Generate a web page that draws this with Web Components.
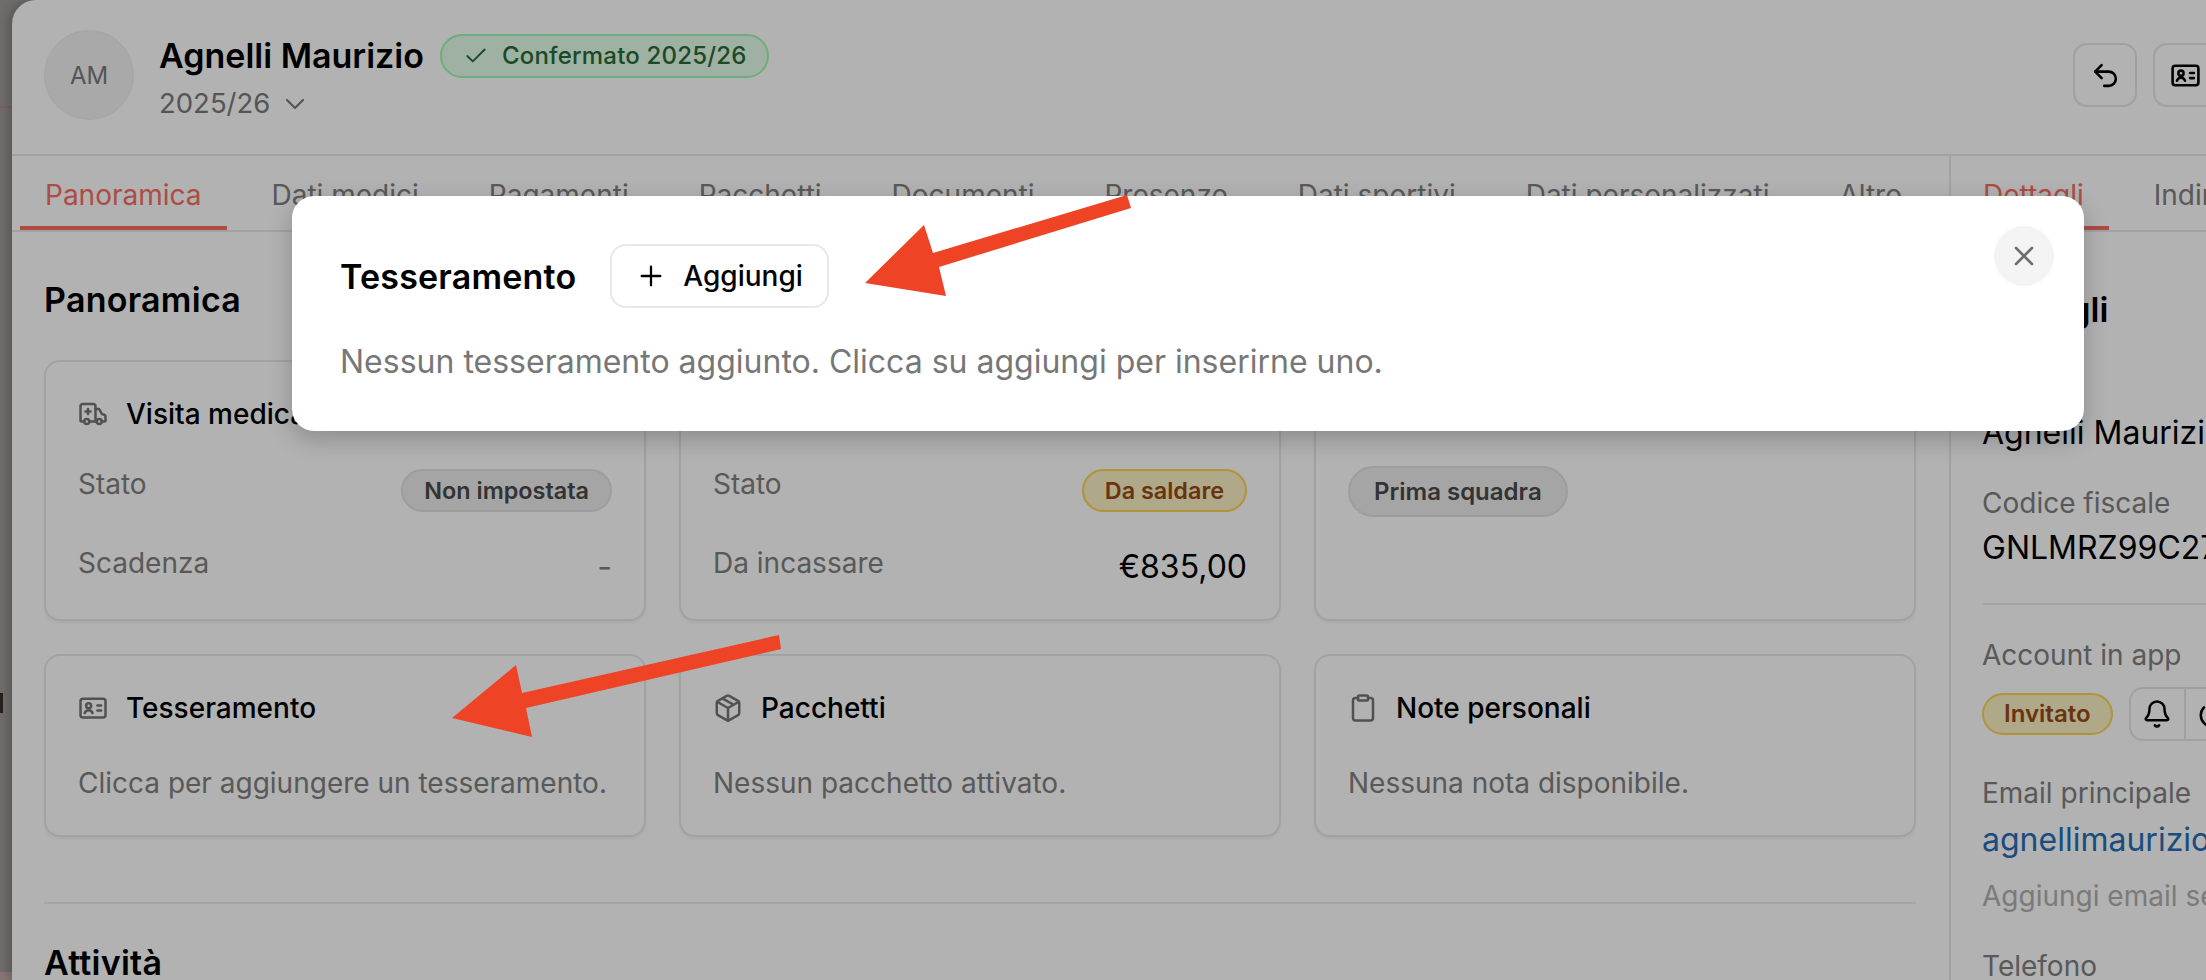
<!DOCTYPE html>
<html lang="it">
<head>
<meta charset="utf-8">
<title>Tesseramento</title>
<style>
  html, body { margin: 0; height: 100%; overflow: hidden; background: #9f9b9b; }
  body { font-family: Inter, "Liberation Sans", sans-serif; color: #000; }
</style>
</head>
<body>
<app-stage>
  <player-drawer slot="drawer">
    <drawer-header slot="header" name="Agnelli Maurizio" season="2025/26" initials="AM">
      <status-pill slot="status" tone="green" size="status"><ui-icon name="check" size="26" stroke="1.7"></ui-icon>Confermato 2025/26</status-pill>
      <icon-button slot="actions"><ui-icon name="undo" size="31"></ui-icon></icon-button>
      <icon-button slot="actions"><ui-icon name="idcard" size="31"></ui-icon></icon-button>
    </drawer-header>

    <tab-strip slot="main-tabs" inset="8">
      <tab-item active>Panoramica</tab-item>
      <tab-item>Dati medici</tab-item>
      <tab-item>Pagamenti</tab-item>
      <tab-item>Pacchetti</tab-item>
      <tab-item>Documenti</tab-item>
      <tab-item>Presenze</tab-item>
      <tab-item>Dati sportivi</tab-item>
      <tab-item>Dati personalizzati</tab-item>
      <tab-item>Altro</tab-item>
    </tab-strip>

    <overview-panel slot="main">
      <info-card slot="top" icon="ambulance" title="Visita medica">
        <card-row label="Stato"><status-pill tone="grey">Non impostata</status-pill></card-row>
        <card-row label="Scadenza"><span style="font-size:32px;line-height:38px;color:#808080">-</span></card-row>
      </info-card>
      <info-card slot="top" icon="wallet" title="Pagamenti">
        <card-row label="Stato"><status-pill tone="yellow">Da saldare</status-pill></card-row>
        <card-row label="Da incassare"><span style="font-size:32px;line-height:38px">€835,00</span></card-row>
      </info-card>
      <info-card slot="top" icon="users" title="Squadre">
        <status-pill tone="grey" size="tall">Prima squadra</status-pill>
      </info-card>
      <info-card slot="bottom" icon="idcard" title="Tesseramento" note="Clicca per aggiungere un tesseramento."></info-card>
      <info-card slot="bottom" icon="package" title="Pacchetti" note="Nessun pacchetto attivato."></info-card>
      <info-card slot="bottom" icon="clipboard" title="Note personali" note="Nessuna nota disponibile."></info-card>
    </overview-panel>

    <tab-strip slot="side-tabs" inset="7">
      <tab-item active>Dettagli</tab-item>
      <tab-item>Indirizzo</tab-item>
    </tab-strip>

    <details-panel slot="side">
      <side-field label="Nome" style="--top:40px">Agnelli Maurizio</side-field>
      <side-field label="Codice fiscale" style="--top:30px">GNLMRZ99C27A794X</side-field>
      <hr-line></hr-line>
      <side-field label="Account in app">
        <account-row>
          <status-pill tone="yellow" size="small">Invitato</status-pill>
          <ui-icon slot="first" name="bell" size="30"></ui-icon>
          <ui-icon slot="second" name="power" size="30"></ui-icon>
        </account-row>
      </side-field>
      <side-field label="Email principale" style="--top:34px;--under:7px" tone="link">agnellimaurizio@gmail.com</side-field>
      <side-field style="--top:16px" tone="muted">Aggiungi email secondaria</side-field>
      <side-field label="Telefono" style="--top:34px">-</side-field>
    </details-panel>
  </player-drawer>

  <page-scrim></page-scrim>

  <tessera-modal title="Tesseramento">
    <add-button slot="action">Aggiungi</add-button>
    Nessun tesseramento aggiunto. Clicca su aggiungi per inserirne uno.
  </tessera-modal>

  <note-arrows></note-arrows>
</app-stage>

<script>
const ICONS = {
  check: '<path d="M20 6 9 17l-5-5"/>',
  chevron: '<path d="m6 9 6 6 6-6"/>',
  plus: '<path d="M5 12h14M12 5v14"/>',
  x: '<path d="M18 6 6 18M6 6l12 12"/>',
  undo: '<path d="M9 14 4 9l5-5"/><path d="M4 9h10.5a5.5 5.5 0 0 1 0 11H11"/>',
  idcard: '<rect x="2" y="4.5" width="20" height="15" rx="2"/><circle cx="8.5" cy="10.2" r="2"/><path d="M5.4 16c.5-1.5 1.7-2.3 3.1-2.3s2.6.8 3.1 2.3M15.5 10h3M15.5 14h3"/>',
  ambulance: '<path d="M10 10H6M8 8v4M9 18h6"/><path d="M14 18V6a2 2 0 0 0-2-2H4a2 2 0 0 0-2 2v11a1 1 0 0 0 1 1h2"/><path d="M19 18h2a1 1 0 0 0 1-1v-3.28a1 1 0 0 0-.684-.948l-1.923-.641a1 1 0 0 1-.578-.502l-1.539-3.076A1 1 0 0 0 16.382 8H14"/><circle cx="17" cy="18" r="2"/><circle cx="7" cy="18" r="2"/>',
  package: '<path d="M11 21.73a2 2 0 0 0 2 0l7-4A2 2 0 0 0 21 16V8a2 2 0 0 0-1-1.73l-7-4a2 2 0 0 0-2 0l-7 4A2 2 0 0 0 3 8v8a2 2 0 0 0 1 1.73z"/><path d="M12 22V12M3.29 7 12 12l8.71-5M7.5 4.27l9 5.15"/>',
  clipboard: '<rect x="8" y="2" width="8" height="4" rx="1"/><path d="M16 4h2a2 2 0 0 1 2 2v14a2 2 0 0 1-2 2H6a2 2 0 0 1-2-2V6a2 2 0 0 1 2-2h2"/>',
  wallet: '<rect x="2" y="6" width="20" height="14" rx="2"/><path d="M2 10h20"/>',
  users: '<circle cx="9" cy="8" r="4"/><path d="M2 21a7 7 0 0 1 14 0"/>',
  bell: '<path d="M10.268 21a2 2 0 0 0 3.464 0"/><path d="M3.262 15.326A1 1 0 0 0 4 17h16a1 1 0 0 0 .74-1.673C19.41 13.956 18 12.499 18 8A6 6 0 0 0 6 8c0 4.499-1.411 5.956-2.738 7.326"/>',
  power: '<path d="M12 2v10"/><path d="M18.4 6.6a9 9 0 1 1-12.77.04"/>'
};

// every element here is just a shadow root with fixed markup
function shadow(el, html) {
  el.attachShadow({ mode: 'open' }).innerHTML = html;
}

class UiIcon extends HTMLElement {
  connectedCallback() {
    const size = this.getAttribute('size') || 30;
    const stroke = this.getAttribute('stroke') || 2;
    shadow(this, `
      <style>:host { display: inline-flex; flex: none; } svg { display: block; }</style>
      <svg width="${size}" height="${size}" viewBox="0 0 24 24" fill="none" stroke="currentColor"
        stroke-width="${stroke}" stroke-linecap="round" stroke-linejoin="round">${ICONS[this.getAttribute('name')]}</svg>`);
  }
}

class AppStage extends HTMLElement {
  constructor() {
    super();
    shadow(this, `
      <style>
        :host { display: block; position: relative; width: 2206px; height: 980px; overflow: hidden; background: #9f9b9b; }
        .line { position: absolute; left: 0; top: 106px; height: 2px; width: 12px; background: #b08a8a; }
        .tick { position: absolute; left: 0; top: 693px; width: 3px; height: 20px; background: #3a2c2c; }
        .foot { position: absolute; left: 0; bottom: 0; width: 12px; height: 8px; background: #c2a8a8; }
        .sheet { position: relative; margin-left: 12px; }
      </style>
      <div class="line"></div><div class="tick"></div><div class="foot"></div>
      <div class="sheet"><slot name="drawer"></slot></div>
      <slot></slot>`);
  }
}

class PlayerDrawer extends HTMLElement {
  constructor() {
    super();
    shadow(this, `
      <style>
        :host { display: block; width: 2237px; height: 980px; background: #fff; border-top-left-radius: 24px; overflow: hidden; box-shadow: -4px 0 10px rgba(0,0,0,.2); }
        .body { display: grid; grid-template-columns: 1937px 1fr; height: 824px; }
        .col { min-width: 0; overflow: hidden; }
        .side { border-left: 2px solid #e9e9e9; }
      </style>
      <slot name="header"></slot>
      <div class="body">
        <div class="col"><slot name="main-tabs"></slot><slot name="main"></slot></div>
        <div class="col side"><slot name="side-tabs"></slot><slot name="side"></slot></div>
      </div>`);
  }
}

class DrawerHeader extends HTMLElement {
  connectedCallback() {
    shadow(this, `
      <style>
        :host { display: flex; align-items: flex-start; box-sizing: border-box; height: 156px; padding: 30px 32px 0; border-bottom: 2px solid #e9e9e9; }
        .avatar { width: 90px; height: 90px; box-sizing: border-box; border: 2px solid #f0f0f0; border-radius: 50%; background: #f3f3f3; color: #7a7a7a;
          display: flex; align-items: center; justify-content: center; font-size: 24px; margin-right: 25px; }
        .top { display: flex; align-items: center; gap: 16px; height: 47px; margin-top: 2px; }
        .name { font-size: 34px; font-weight: 600; white-space: nowrap; }
        .season { display: flex; align-items: center; gap: 9px; color: #7a7a7a; font-size: 27.5px; line-height: 36px; margin-top: 6px; }
        .season ui-icon { margin-top: 2px; }
        .actions { display: flex; gap: 16px; margin-left: auto; margin-top: 13px; }
      </style>
      <div class="avatar">${this.getAttribute('initials')}</div>
      <div>
        <div class="top"><span class="name">${this.getAttribute('name')}</span><slot name="status"></slot></div>
        <div class="season">${this.getAttribute('season')}<ui-icon name="chevron" size="32" stroke="1.6"></ui-icon></div>
      </div>
      <div class="actions"><slot name="actions"></slot></div>`);
  }
}

class IconButton extends HTMLElement {
  constructor() {
    super();
    shadow(this, `
      <style>
        :host { display: flex; align-items: center; justify-content: center; box-sizing: border-box; width: 64px; height: 64px;
          border: 2px solid #e6e6e6; border-radius: 14px; background: #fff; }
      </style><slot></slot>`);
  }
}

class StatusPill extends HTMLElement {
  connectedCallback() {
    const tones = {
      green: ['#e3fee9', '#9ff5b1', '#286a36'],
      grey: ['#ededed', '#e1e1e1', '#4a4a4a'],
      yellow: ['#fbf1c5', '#fed354', '#974a17']
    };
    const sizes = {
      status: 'height:44px;padding:0 20px 0 21px;gap:13px;font-size:24px;font-weight:500;letter-spacing:.2px',
      tall: 'height:51px;padding:0 24px;font-size:24px',
      small: 'height:42px;padding:0 20px;font-size:24px',
      normal: 'height:43px;padding:0 21px;font-size:23.4px'
    };
    const [bg, line, ink] = tones[this.getAttribute('tone')];
    const size = sizes[this.getAttribute('size') || 'normal'];
    shadow(this, `
      <style>
        :host { display: inline-flex; align-items: center; box-sizing: border-box; white-space: nowrap; font-weight: 600;
          border-radius: 999px; background: ${bg}; border: 2px solid ${line}; color: ${ink}; ${size}; }
      </style><slot></slot>`);
  }
}

class TabStrip extends HTMLElement {
  connectedCallback() {
    shadow(this, `
      <style>
        :host { display: flex; gap: 20px; height: 76px; box-sizing: border-box; padding-left: ${this.getAttribute('inset')}px; border-bottom: 2px solid #e9e9e9; white-space: nowrap; }
      </style><slot></slot>`);
  }
}

class TabItem extends HTMLElement {
  constructor() {
    super();
    shadow(this, `
      <style>
        :host { display: block; flex: none; box-sizing: border-box; height: 74px; padding: 20px 25px 12px; font-size: 28px; line-height: 38px; color: #808080; border-bottom: 4px solid transparent; }
        :host([active]) { color: #f76e63; border-bottom-color: #f76e63; }
      </style><slot></slot>`);
  }
}

class OverviewPanel extends HTMLElement {
  constructor() {
    super();
    shadow(this, `
      <style>
        :host { display: block; padding: 48px 33px 0 32px; }
        h2 { margin: 0; font-size: 34px; line-height: 40px; font-weight: 600; letter-spacing: .25px; }
        .grid { display: grid; grid-template-columns: repeat(3, 1fr); grid-template-rows: 261px 183px; gap: 33px; margin-top: 40px; }
        hr { border: 0; height: 2px; background: #ededed; margin: 65px 0 39px; }
      </style>
      <h2>Panoramica</h2>
      <div class="grid"><slot name="top"></slot><slot name="bottom"></slot></div>
      <hr>
      <h2>Attività</h2>`);
  }
}

class InfoCard extends HTMLElement {
  connectedCallback() {
    const note = this.getAttribute('note');
    shadow(this, `
      <style>
        :host { display: block; box-sizing: border-box; padding: 32px 32px 0 32px; border: 2px solid #e9e9e9; border-radius: 16px; background: #fff; box-shadow: 0 2px 3px rgba(0,0,0,.05); }
        .title { display: flex; align-items: center; gap: 18px; font-size: 28px; font-weight: 500; line-height: 40px; white-space: nowrap; }
        ui-icon { color: #757575; }
        .body { display: flex; flex-direction: column; align-items: flex-start; gap: 43px; margin-top: 32px; }
        .note { color: #808080; font-size: 28px; line-height: 36px; margin-top: 37px; white-space: nowrap; }
      </style>
      <div class="title"><ui-icon name="${this.getAttribute('icon')}" size="30"></ui-icon>${this.getAttribute('title')}</div>
      ${note ? `<div class="note">${note}</div>` : '<div class="body"><slot></slot></div>'}`);
  }
}

class CardRow extends HTMLElement {
  connectedCallback() {
    shadow(this, `
      <style>
        :host { display: flex; justify-content: space-between; align-items: flex-start; align-self: stretch; height: 36px; font-size: 28px; line-height: 36px; }
        .label { color: #808080; }
        .val { margin-top: 3px; }
      </style>
      <span class="label">${this.getAttribute('label')}</span><span class="val"><slot></slot></span>`);
  }
}

class DetailsPanel extends HTMLElement {
  constructor() {
    super();
    shadow(this, `
      <style>
        :host { display: block; padding: 58px 0 0 31px; white-space: nowrap; }
        h2 { margin: 0; font-size: 34px; line-height: 40px; font-weight: 600; }
      </style>
      <h2>Dettagli</h2><slot></slot>`);
  }
}

class SideField extends HTMLElement {
  connectedCallback() {
    const label = this.getAttribute('label');
    const tones = { link: '#266eb6', muted: '#b0b0b0' };
    const ink = tones[this.getAttribute('tone')] || '#000';
    shadow(this, `
      <style>
        :host { display: block; margin-top: var(--top, 0); }
        .label { color: #808080; font-size: 28px; line-height: 36px; margin-bottom: var(--under, 5px); }
        .value { color: ${ink}; font-size: 32px; line-height: 44px; }
        :host([tone="muted"]) .value { font-size: 28px; line-height: 36px; }
      </style>
      ${label ? `<div class="label">${label}</div>` : ''}
      <div class="value"><slot></slot></div>`);
  }
}

class HrLine extends HTMLElement {
  constructor() {
    super();
    shadow(this, `<style>:host { display: block; height: 2px; margin: 33px 0 32px; background: #ededed; }</style>`);
  }
}

class AccountRow extends HTMLElement {
  constructor() {
    super();
    shadow(this, `
      <style>
        :host { display: flex; align-items: center; gap: 16px; margin-top: 14px; height: 54px; }
        .group { display: flex; box-sizing: border-box; height: 54px; border: 2px solid #e6e6e6; border-radius: 14px; color: #000; }
        .cell { display: flex; align-items: center; justify-content: center; width: 53px; }
        .cell + .cell { border-left: 2px solid #e6e6e6; }
      </style>
      <slot></slot>
      <div class="group">
        <div class="cell"><slot name="first"></slot></div>
        <div class="cell"><slot name="second"></slot></div>
      </div>`);
  }
}

class PageScrim extends HTMLElement {
  constructor() {
    super();
    shadow(this, `<style>:host { display: block; position: absolute; inset: 0; background: rgba(0,0,0,.3); }</style>`);
  }
}

class AddButton extends HTMLElement {
  constructor() {
    super();
    shadow(this, `
      <style>
        :host { display: inline-flex; align-items: center; gap: 16px; box-sizing: border-box; height: 64px; padding: 0 24px 0 23px; border: 2px solid #e8e8e8; border-radius: 16px; background: #fff;
          color: #000; font-size: 28px; font-weight: 500; }
      </style>
      <ui-icon name="plus" size="32" stroke="1.7"></ui-icon><slot></slot>`);
  }
}

class TesseraModal extends HTMLElement {
  connectedCallback() {
    shadow(this, `
      <style>
        :host { display: block; position: absolute; left: 292px; top: 196px; width: 1792px; height: 235px; box-sizing: border-box; padding: 48px 48px;
          background: #fff; border-radius: 22px; box-shadow: 0 8px 24px rgba(0,0,0,.22); }
        .head { display: flex; align-items: center; gap: 34px; }
        h2 { margin: 0; font-size: 34px; font-weight: 600; letter-spacing: .2px; }
        p { margin: 36px 0 0; color: #777; font-size: 32px; line-height: 36px; }
        .close { position: absolute; top: 30px; right: 30px; width: 60px; height: 60px; border-radius: 50%; background: #f4f4f4; color: #6f6f6f;
          display: flex; align-items: center; justify-content: center; }
      </style>
      <div class="head"><h2>${this.getAttribute('title')}</h2><slot name="action"></slot></div>
      <p><slot></slot></p>
      <div class="close"><ui-icon name="x" size="32"></ui-icon></div>`);
  }
}

class NoteArrows extends HTMLElement {
  constructor() {
    super();
    shadow(this, `
      <style>
        :host { display: block; position: absolute; inset: 0; pointer-events: none; }
        svg { display: block; }
      </style>
      <svg width="2206" height="980" fill="#ee4325">
        <polygon points="865,283 924,225 933,253 1127,195 1131,208 939,267 946,296"/>
        <polygon points="452,718 516,665 522,693 779,635 781,649 526,708 532,737"/>
      </svg>`);
  }
}

customElements.define('ui-icon', UiIcon);
customElements.define('app-stage', AppStage);
customElements.define('player-drawer', PlayerDrawer);
customElements.define('drawer-header', DrawerHeader);
customElements.define('icon-button', IconButton);
customElements.define('status-pill', StatusPill);
customElements.define('tab-strip', TabStrip);
customElements.define('tab-item', TabItem);
customElements.define('overview-panel', OverviewPanel);
customElements.define('info-card', InfoCard);
customElements.define('card-row', CardRow);
customElements.define('details-panel', DetailsPanel);
customElements.define('side-field', SideField);
customElements.define('hr-line', HrLine);
customElements.define('account-row', AccountRow);
customElements.define('page-scrim', PageScrim);
customElements.define('add-button', AddButton);
customElements.define('tessera-modal', TesseraModal);
customElements.define('note-arrows', NoteArrows);
</script>
</body>
</html>
